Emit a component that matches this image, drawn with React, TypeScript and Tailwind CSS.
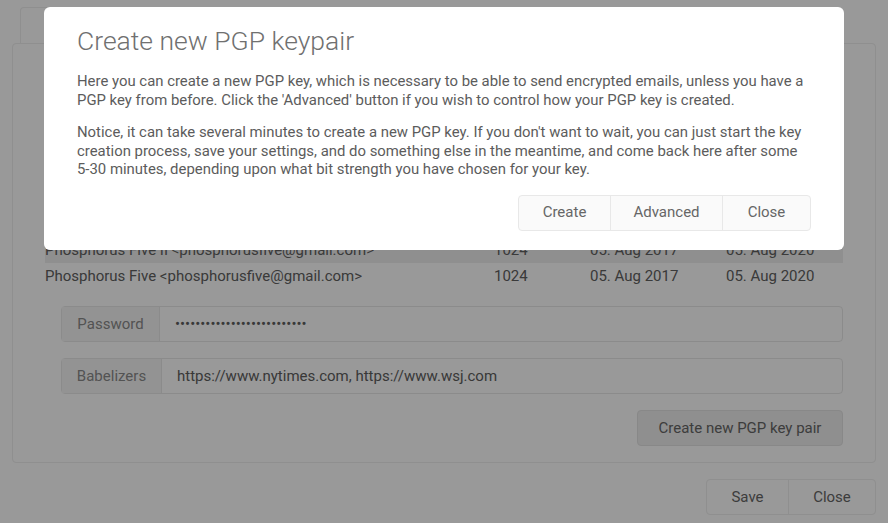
import React from "react";

const font = { fontFamily: "Roboto, 'Noto Sans', sans-serif" };

function Row({ name, hl }: { name: string; hl?: boolean }) {
  return (
    <div className={`flex h-[26px] items-center text-[15px] text-[#616161] ${hl ? "bg-[#eeeeee]" : ""}`}>
      <div className="w-[449px]">{name}</div>
      <div className="w-[96px]">1024</div>
      <div className="w-[136px]">05. Aug 2017</div>
      <div>05. Aug 2020</div>
    </div>
  );
}

function Field({ label, value, labelW }: { label: string; value: string; labelW: string }) {
  return (
    <div className="flex h-[36px] rounded-[4px] border border-[#e8e8e8] text-[15px]">
      <div className={`flex ${labelW} items-center justify-center border-r border-[#e8e8e8] bg-[#f6f6f6] text-[#8a8a8a]`}>
        {label}
      </div>
      <div className="flex items-center pl-[15px] text-[#5e5e5e]">{value}</div>
    </div>
  );
}

export default function App() {
  return (
    <div className="relative h-[523px] w-[888px] overflow-hidden bg-white" style={font}>
      {/* page underneath */}
      <div className="px-[12px] pt-[7px]">
        <div className="ml-[8px] h-[36px] w-[300px] rounded-t-[4px] border border-b-0 border-[#eeeeee]" />
        <div className="h-[420px] rounded-[4px] border border-[#eeeeee] px-[32px] pt-[193px]">
          <div>
            <Row name="Phosphorus Five II <phosphorusfive@gmail.com>" hl />
            <Row name="Phosphorus Five <phosphorusfive@gmail.com>" />
          </div>
          <div className="ml-[16px] mt-[17px] flex flex-col gap-[16px]">
            <Field label="Password" value="••••••••••••••••••••••••••" labelW="w-[98px]" />
            <Field label="Babelizers" value="https://www.nytimes.com, https://www.wsj.com" labelW="w-[100px]" />
          </div>
          <div className="mt-[16px] flex justify-end">
            <button className="h-[36px] w-[206px] rounded-[4px] border border-[#e3e3e3] bg-[#eeeeee] text-[15px] text-[#666666]">
              Create new PGP key pair
            </button>
          </div>
        </div>
        <div className="mt-[16px] flex justify-end">
          <div className="flex h-[36px] rounded-[4px] border border-[#eeeeee] text-[15px] text-[#666666]">
            <div className="flex w-[82px] items-center justify-center border-r border-[#eeeeee]">Save</div>
            <div className="flex w-[86px] items-center justify-center">Close</div>
          </div>
        </div>
      </div>

      {/* overlay */}
      <div className="absolute inset-0 bg-black/40" />

      {/* modal */}
      <div className="absolute left-[44px] top-[7px] w-[800px] rounded-[6px] bg-white pb-[19px] pl-[33px] pr-[33px] pt-[18px]">
        <h1 className="text-[26.5px] font-light leading-[32px] text-[#707070]">Create new PGP keypair</h1>
        <p className="mt-[15px] text-[14.9px] leading-[18.5px] text-[#5c5c5c]">
          Here you can create a new PGP key, which is necessary to be able to send encrypted emails, unless you have a
          PGP key from before. Click the 'Advanced' button if you wish to control how your PGP key is created.
        </p>
        <p className="mt-[14px] text-[14.9px] leading-[18.5px] text-[#5c5c5c]">
          Notice, it can take several minutes to create a new PGP key. If you don't want to wait, you can just start the key
          creation process, save your settings, and do something else in the meantime, and come back here after some
          5-30 minutes, depending upon what bit strength you have chosen for your key.
        </p>
        <div className="mt-[16px] flex justify-end">
          <div className="flex h-[36px] rounded-[4px] border border-[#e8e8e8] bg-[#fafafa] text-[15px] text-[#666666]">
            <div className="flex w-[92px] items-center justify-center border-r border-[#e8e8e8]">Create</div>
            <div className="flex w-[112px] items-center justify-center border-r border-[#e8e8e8]">Advanced</div>
            <div className="flex w-[87px] items-center justify-center">Close</div>
          </div>
        </div>
      </div>
    </div>
  );
}
